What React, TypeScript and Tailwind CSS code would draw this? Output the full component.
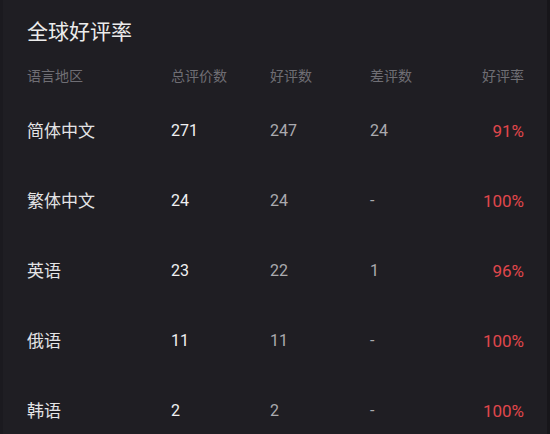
import React from "react";

const rows = [
  { name: "简体中文", total: "271", good: "247", bad: "24", rate: "91%" },
  { name: "繁体中文", total: "24", good: "24", bad: "-", rate: "100%" },
  { name: "英语", total: "23", good: "22", bad: "1", rate: "96%" },
  { name: "俄语", total: "11", good: "11", bad: "-", rate: "100%" },
  { name: "韩语", total: "2", good: "2", bad: "-", rate: "100%" },
];

export default function App() {
  return (
    <div
      className="w-[550px] h-[434px] overflow-hidden bg-[#1f1e23] flex"
      style={{ fontFamily: 'Roboto, "Noto Sans CJK SC", sans-serif' }}
    >
      <div className="w-[3px] bg-[#1b1a1f]" />
      <div className="flex-1 pl-[24px] pr-[23px]">
        <div className="pt-[18px] h-[46px] text-[21px] leading-[28px] text-[#ececec]">全球好评率</div>
        <div className="grid grid-cols-[144px_99px_100px_1fr_auto] h-[20px] mt-[20px] text-[14px] leading-[20px] text-[#6f6e74]">
          <div>语言地区</div>
          <div>总评价数</div>
          <div>好评数</div>
          <div>差评数</div>
          <div className="text-right">好评率</div>
        </div>
        <div className="mt-[10px]">
          {rows.map((r) => (
            <div
              key={r.name}
              className="grid grid-cols-[144px_99px_100px_1fr_auto] h-[70px] items-center text-[16px] leading-[22px]"
            >
              <div className="text-[17px] text-[#e4e4e6]">{r.name}</div>
              <div className="text-[#f0f0f2]">{r.total}</div>
              <div className="text-[#ababaf]">{r.good}</div>
              <div className="text-[#ababaf]">{r.bad}</div>
              <div className="text-right text-[17px] text-[#e0474c]">{r.rate}</div>
            </div>
          ))}
        </div>
      </div>
      <div className="w-[3px] bg-[#17161a]" />
    </div>
  );
}
